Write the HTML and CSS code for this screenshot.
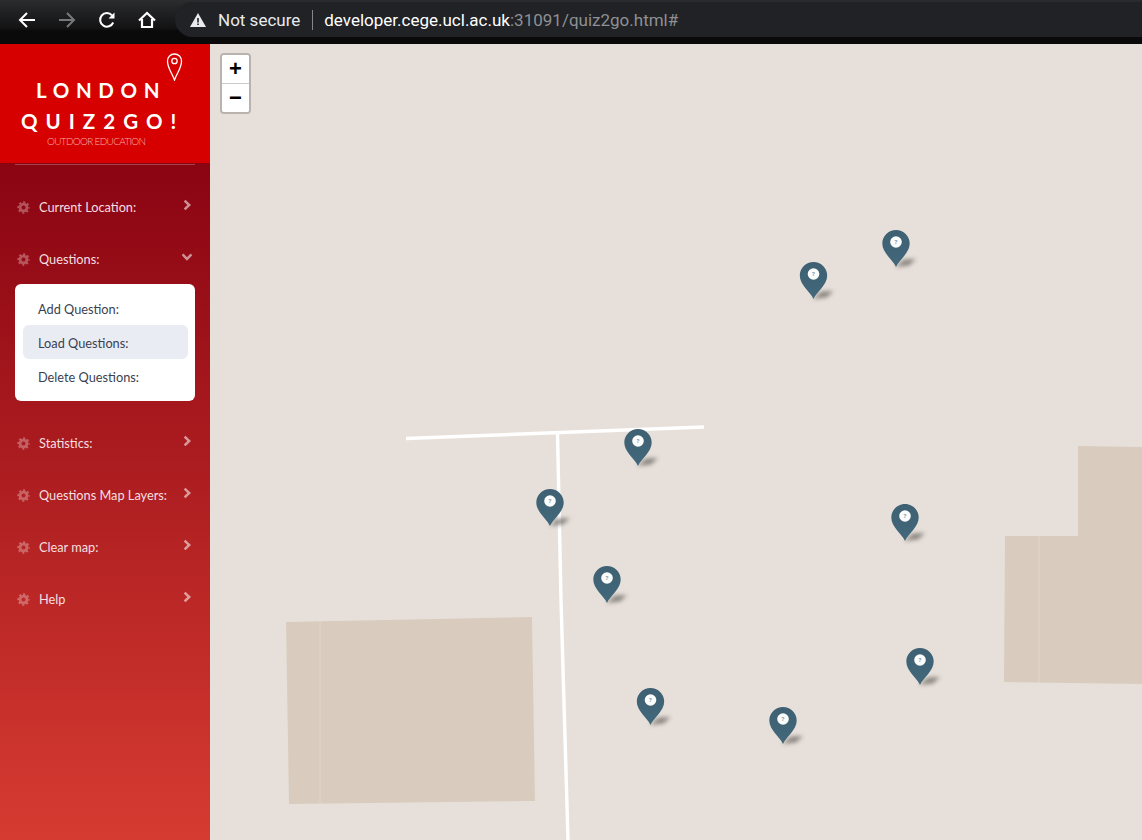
FILE: index.html
```html
<!DOCTYPE html>
<html lang="en">
<head>
    <meta charset="UTF-8">
    <meta name="viewport" content="width=device-width, initial-scale=1.0">
    <title>London Quiz2Go</title>
    <link rel="stylesheet" href="styles.css">
</head>
<body>

    <svg class="defs" width="0" height="0">
        <defs>
            <symbol id="gear" viewBox="0 0 14 14">
                <circle cx="7" cy="7" r="3.7" fill="none" stroke="currentColor" stroke-width="3"></circle>
                <circle cx="7" cy="7" r="5.7" fill="none" stroke="currentColor" stroke-width="2" stroke-dasharray="2.3 2.18" stroke-dashoffset="1.15"></circle>
            </symbol>
            <symbol id="chev" viewBox="0 0 10 12">
                <path d="M2.6 1.6 L7.2 6 L2.6 10.4" fill="none" stroke="currentColor" stroke-width="2.5"></path>
            </symbol>
            <symbol id="chevdown" viewBox="0 0 12 10">
                <path d="M1.6 2.4 L6 7 L10.4 2.4" fill="none" stroke="currentColor" stroke-width="2.5"></path>
            </symbol>
            <linearGradient id="pinfill" x1="0" y1="0" x2="0" y2="1">
                <stop offset="0" stop-color="#3e6072"></stop>
                <stop offset="1" stop-color="#42687b"></stop>
            </linearGradient>
            <filter id="blur" x="-50%" y="-100%" width="200%" height="300%"><feGaussianBlur stdDeviation="2"></feGaussianBlur></filter>
            <g id="pin">
                <path d="M-1 0 L8 -7.5 L20 -8 L13 -1.5 Z" fill="#4d4a44" opacity="0.6" filter="url(#blur)"></path>
                <path d="M0 0 C-3 -7 -13.7 -14 -13.7 -23.5 C-13.7 -31 -7.5 -37 0 -37 C7.5 -37 13.7 -31 13.7 -23.5 C13.7 -14 3 -7 0 0 Z" fill="url(#pinfill)"></path>
                <circle cx="0" cy="-25" r="5.8" fill="#fbfcfc"></circle>
                <text x="0" y="-22.8" class="pin-mark">?</text>
            </g>
        </defs>
    </svg>

    <header class="browser-bar">
        <nav class="browser-btns">
            <svg class="tool" viewBox="0 0 18 18"><path d="M17 9 H2.5 M9 2 L2 9 L9 16" fill="none" stroke="#fff" stroke-width="2"></path></svg>
            <svg class="tool" viewBox="0 0 18 18"><path d="M1 9 H15.5 M9 2 L16 9 L9 16" fill="none" stroke="#77787a" stroke-width="2"></path></svg>
            <svg class="tool" viewBox="0 0 18 18"><path d="M15.2 11.5 A6.8 6.8 0 1 1 14 4.3" fill="none" stroke="#fff" stroke-width="2"></path><path d="M16.5 1.5 V7.5 H10.5 Z" fill="#fff"></path></svg>
            <svg class="tool" viewBox="0 0 18 18"><path d="M1 9.5 L9 2 L17 9.5 M4 8 V16 H14 V8" fill="none" stroke="#fff" stroke-width="2.2"></path></svg>
        </nav>
        <div class="address">
            <svg class="warn" viewBox="0 0 16 14"><path d="M8 0 L16 14 H0 Z" fill="#e8eaed"></path><path d="M7.2 5 H8.8 V9.5 H7.2 Z M7.2 10.5 H8.8 V12 H7.2 Z" fill="#202124"></path></svg>
            <span class="secure">Not secure</span>
            <span class="divider"></span>
            <span class="url">developer.cege.ucl.ac.uk<span class="url-rest">:31091/quiz2go.html#</span></span>
        </div>
    </header>

    <div class="wrapper">
        <aside class="sidebar">
            <div class="logo">
                <svg class="logo-pin" viewBox="0 0 16 28"><path d="M8 27 C6 21 1 15 1 8.2 C1 4 4 1 8 1 C12 1 15 4 15 8.2 C15 15 10 21 8 27 Z" fill="none" stroke="#fff" stroke-width="1.3"></path><circle cx="8" cy="8" r="2.7" fill="none" stroke="#fff" stroke-width="1.3"></circle></svg>
                <div class="logo-line1">LONDON</div>
                <div class="logo-line2">QUIZ2GO!</div>
                <div class="logo-sub">OUTDOOR EDUCATION</div>
            </div>
            <hr class="side-rule">
            <ul class="menu">
                <li class="menu-item">
                    <svg class="gear"><use href="#gear"></use></svg>
                    <span class="menu-label">Current Location:</span>
                    <svg class="chev"><use href="#chev"></use></svg>
                </li>
                <li class="menu-item">
                    <svg class="gear"><use href="#gear"></use></svg>
                    <span class="menu-label">Questions:</span>
                    <svg class="chev-down"><use href="#chevdown"></use></svg>
                </li>
                <li class="submenu">
                    <a class="sub-item">Add Question:</a>
                    <a class="sub-item active">Load Questions:</a>
                    <a class="sub-item">Delete Questions:</a>
                </li>
                <li class="menu-item">
                    <svg class="gear"><use href="#gear"></use></svg>
                    <span class="menu-label">Statistics:</span>
                    <svg class="chev"><use href="#chev"></use></svg>
                </li>
                <li class="menu-item">
                    <svg class="gear"><use href="#gear"></use></svg>
                    <span class="menu-label">Questions Map Layers:</span>
                    <svg class="chev"><use href="#chev"></use></svg>
                </li>
                <li class="menu-item">
                    <svg class="gear"><use href="#gear"></use></svg>
                    <span class="menu-label">Clear map:</span>
                    <svg class="chev"><use href="#chev"></use></svg>
                </li>
                <li class="menu-item">
                    <svg class="gear"><use href="#gear"></use></svg>
                    <span class="menu-label">Help</span>
                    <svg class="chev"><use href="#chev"></use></svg>
                </li>
            </ul>
        </aside>

        <main class="map">
            <!-- viewBox uses screen coords so the map features are easy to read off -->
            <svg class="map-layer" viewBox="210 44 932 796">
                <polygon class="building" points="286,622 532,617 535,801 289,804"></polygon>
                <polygon class="building" points="1078,446 1142,447 1142,684 1004,682 1005,536 1078,536"></polygon>
                <line class="seam" x1="320" y1="621" x2="320" y2="804"></line>
                <line class="seam" x1="1039" y1="536" x2="1039" y2="683"></line>
                <path class="road" d="M406 438.5 L704 427"></path>
                <path class="road" d="M557.5 433 L561 600 L568 840"></path>
                <use href="#pin" x="896" y="267"></use>
                <use href="#pin" x="813.5" y="299"></use>
                <use href="#pin" x="638" y="466"></use>
                <use href="#pin" x="550" y="526"></use>
                <use href="#pin" x="905" y="541"></use>
                <use href="#pin" x="607" y="603"></use>
                <use href="#pin" x="920" y="685"></use>
                <use href="#pin" x="650.5" y="725"></use>
                <use href="#pin" x="783" y="744"></use>
            </svg>
            <div class="zoom-ctl">
                <a class="zoom-btn">+</a>
                <a class="zoom-btn">&minus;</a>
            </div>
        </main>
    </div>

</body>
</html>
```

FILE: styles.css
```css
* {
    box-sizing: border-box;
}
html, body {
    margin: 0;
    height: 100%;
}
body {
    display: flex;
    flex-direction: column;
    height: 840px;
    overflow: hidden;
    font-family: Lato, Arial, sans-serif;
    background: #e7e0da;
}
.defs {
    position: absolute;
}

/* browser chrome */
.browser-bar {
    height: 44px;
    flex: none;
    display: flex;
    align-items: flex-start;
    background: linear-gradient(#2b2c2e 0, #131314 28px, #0a0a0a 31px, #0a0a0a 100%);
}
.browser-btns {
    width: 175px;
    flex: none;
    display: flex;
    gap: 22px;
    padding: 11px 0 0 18px;
}
.tool {
    width: 18px;
    height: 18px;
}
.address {
    flex: 1;
    height: 35px;
    margin-top: 2px;
    display: flex;
    align-items: center;
    background: #202226;
    border-radius: 18px 0 0 18px;
    padding-left: 15px;
    font-family: Roboto, Arial, sans-serif;
    font-size: 17px;
    color: #e8eaed;
}
.warn {
    width: 16px;
    height: 14px;
}
.secure {
    margin-left: 12px;
}
.divider {
    width: 1px;
    height: 20px;
    background: #85878a;
    margin: 0 11px 0 12px;
}
.url {
    color: #fff;
}
.url-rest {
    color: #8e9093;
}

.wrapper {
    flex: 1;
    display: flex;
    min-height: 0;
}

/* sidebar */
.sidebar {
    width: 210px;
    flex: none;
    background: linear-gradient(#8a0412 119px, #d63b31 100%);
}
.logo {
    position: relative;
    height: 119px;
    background: #d70000;
    color: #fff;
    font-family: Lato, Arial, sans-serif;
    font-weight: 700;
    padding-top: 34px;
}
.logo-pin {
    position: absolute;
    left: 166px;
    top: 9px;
    width: 17px;
    height: 28px;
}
.logo-line1 {
    font-size: 20.5px;
    line-height: 24px;
    letter-spacing: 6.6px;
    padding-left: 36px;
}
.logo-line2 {
    font-size: 20.5px;
    line-height: 24px;
    letter-spacing: 8px;
    margin-top: 7px;
    padding-left: 21px;
}
.logo-sub {
    font-size: 10px;
    font-weight: 300;
    line-height: 12px;
    letter-spacing: -0.7px;
    margin-top: 2px;
    color: #f6b0ac;
    padding-left: 47px;
}
.side-rule {
    margin: 1px 15px 0;
    border: 0;
    height: 1px;
    background: #a8404a;
}
.menu {
    list-style: none;
    margin: 0;
    padding: 16px 0 0;
}
.menu-item {
    height: 52px;
    display: flex;
    align-items: center;
    padding: 0 18px 0 17px;
    font-size: 12.75px;
    color: #f5dfe0;
}
.gear {
    width: 13px;
    height: 13px;
    flex: none;
    color: #fff;
    opacity: 0.3;
}
.menu-label {
    flex: 1;
    margin-left: 9px;
}
.chev, .chev-down {
    flex: none;
    color: #fff;
    opacity: 0.55;
    margin-bottom: 4px;
}
.chev {
    width: 10px;
    height: 12px;
}
.chev-down {
    width: 12px;
    height: 10px;
    margin-right: -1px;
}
.submenu {
    margin: -1px 15px 16px;
    padding: 7px 7px 8px 8px;
    background: #fff;
    border-radius: 6px;
}
.sub-item {
    display: block;
    height: 34px;
    line-height: 36px;
    padding-left: 15px;
    font-size: 12.75px;
    color: #3a3f51;
    border-radius: 6px;
}
.sub-item.active {
    background: #e9ecf3;
}

/* map */
.map {
    flex: 1;
    position: relative;
    background: #e7e0da;
}
.map-layer {
    display: block;
    width: 100%;
    height: 100%;
}
.building {
    fill: #d9ccbe;
}
.seam {
    stroke: #e0d5c9;
    stroke-width: 1;
}
.road {
    fill: none;
    stroke: #fff;
    stroke-width: 3.4;
}
.pin-mark {
    font-family: "Open Sans", Arial, sans-serif;
    font-size: 6px;
    font-weight: 700;
    text-anchor: middle;
    fill: #8ba1ad;
}
.zoom-ctl {
    position: absolute;
    left: 10px;
    top: 9px;
    width: 31px;
    border: 2px solid rgba(0, 0, 0, 0.2);
    border-radius: 4px;
    background-clip: padding-box;
}
.zoom-btn {
    display: block;
    height: 28px;
    line-height: 27px;
    text-align: center;
    background: #fff;
    color: #000;
    font-family: "Liberation Sans", Arial, sans-serif;
    font-size: 22px;
    font-weight: 700;
}
.zoom-btn:first-child {
    border-bottom: 1px solid #ccc;
    height: 29px;
    border-radius: 2px 2px 0 0;
}
.zoom-btn:last-child {
    border-radius: 0 0 2px 2px;
}
```
